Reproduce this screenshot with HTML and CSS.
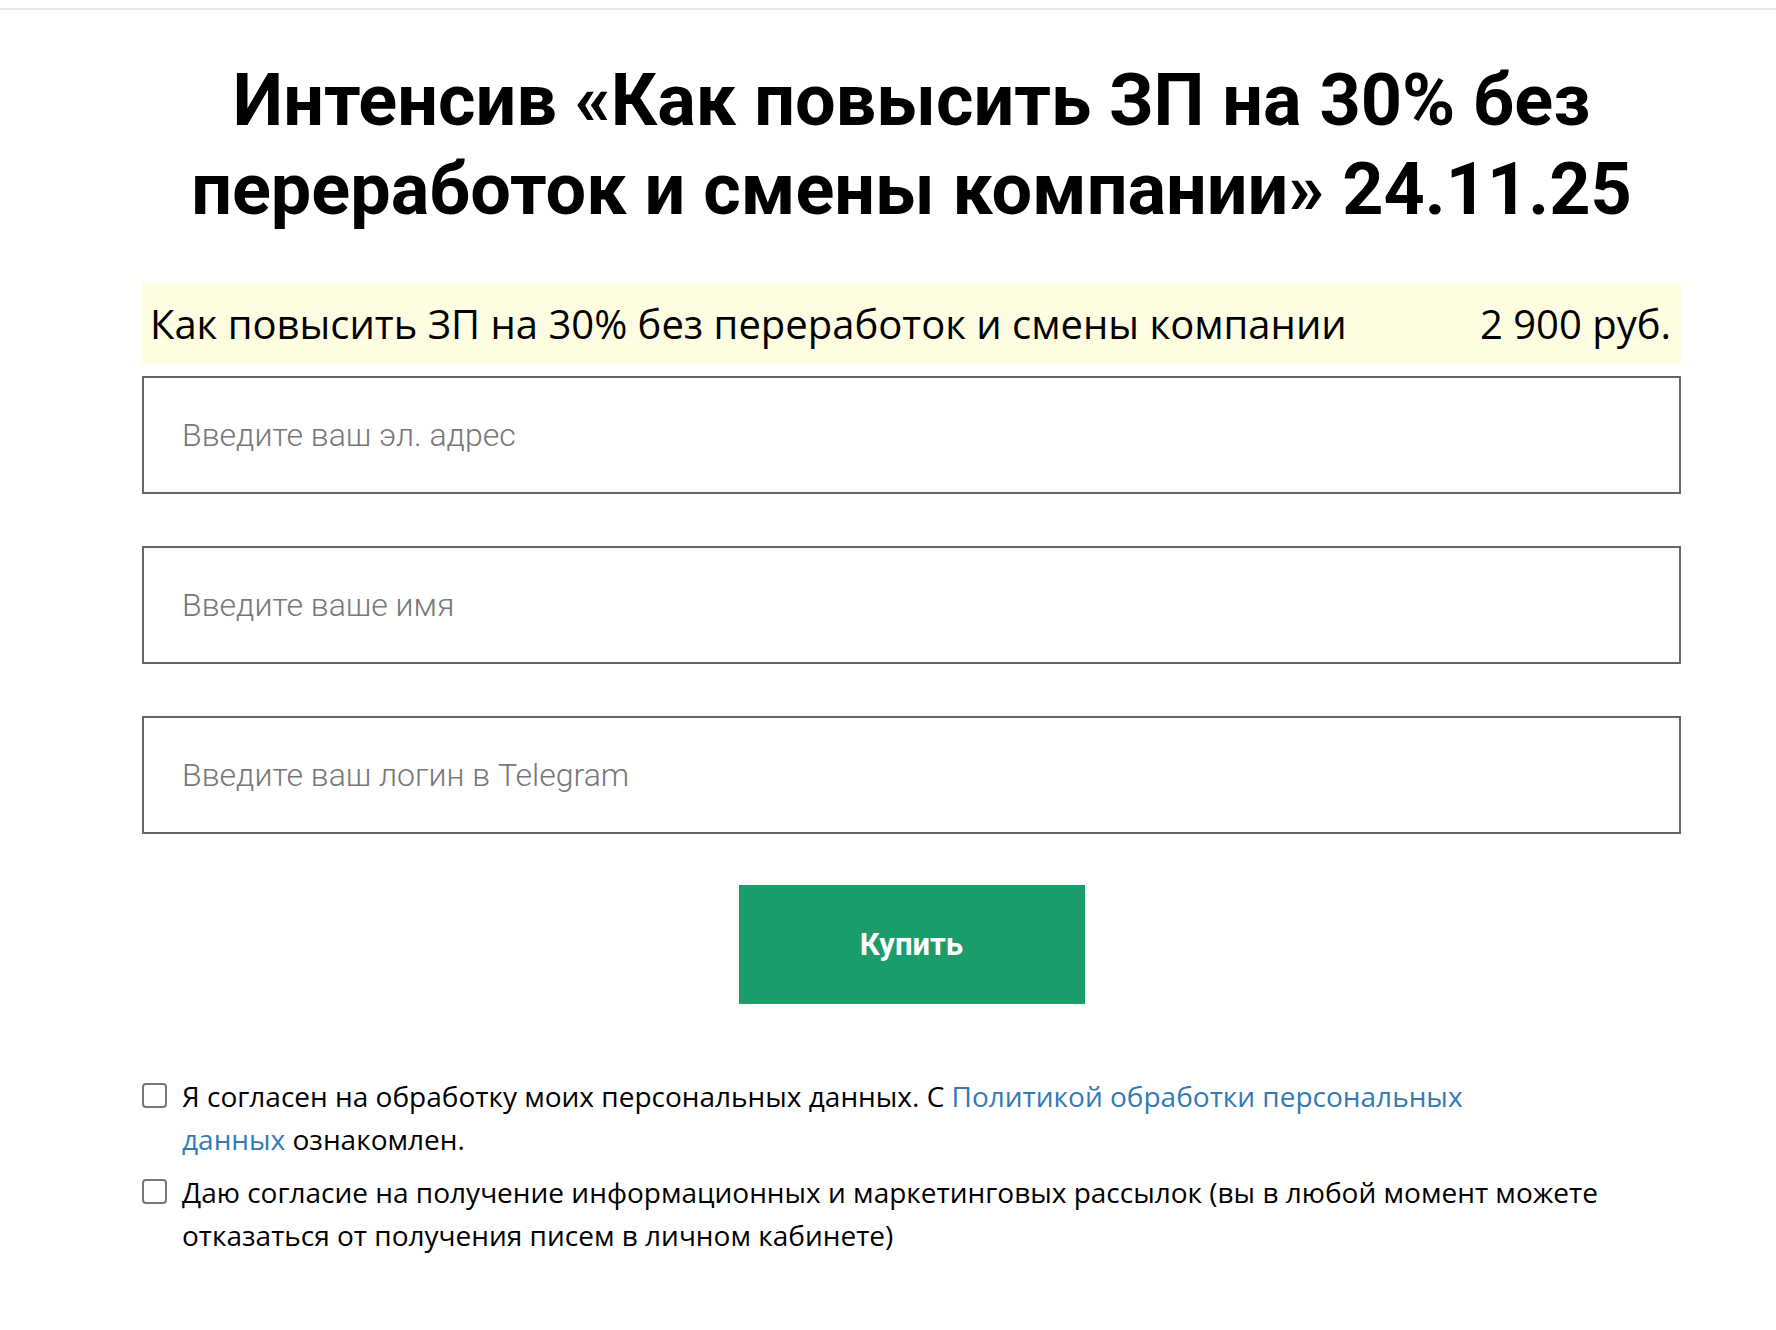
FILE: index.html
```html
<!DOCTYPE html>
<html lang="ru">
<head>
<meta charset="utf-8">
<title>Интенсив</title>
<link rel="stylesheet" href="styles.css">
</head>
<body>
<div class="topline"></div>
<main class="wrap">
  <h1 class="title">Интенсив «Как повысить ЗП на 30% без переработок и смены компании» 24.11.25</h1>
  <div class="product">
    <span class="product-name">Как повысить ЗП на 30% без переработок и смены компании</span>
    <span class="product-price">2 900 руб.</span>
  </div>
  <form class="form">
    <input class="field" type="text" placeholder="Введите ваш эл. адрес">
    <input class="field" type="text" placeholder="Введите ваше имя">
    <input class="field" type="text" placeholder="Введите ваш логин в Telegram">
    <div class="actions">
      <button class="buy" type="button">Купить</button>
    </div>
    <div class="agreements">
      <label class="agree">
        <span class="box"></span>
        <span class="agree-text">Я согласен на обработку моих персональных данных. С <a href="#" class="link">Политикой обработки персональных<br>данных</a> ознакомлен.</span>
      </label>
      <label class="agree">
        <span class="box"></span>
        <span class="agree-text">Даю согласие на получение информационных и маркетинговых рассылок (вы в любой момент можете отказаться от получения писем в личном кабинете)</span>
      </label>
    </div>
  </form>
</main>
</body>
</html>
```
FILE: styles.css
```css
* { box-sizing: border-box; }
html, body { margin: 0; padding: 0; background: #fff; }
body { font-family: "Open Sans", "Liberation Sans", sans-serif; color: #000; }

.topline {
  margin-top: 8px;
  height: 2px;
  background: #e6e6e6;
}

.wrap {
  margin-left: 142px;
  width: 1539px;
}

.title {
  margin: 46px 0 0;
  font-family: Roboto, "Liberation Sans", sans-serif;
  font-weight: 700;
  font-size: 72px;
  line-height: 89px;
  text-align: center;
  color: #000;
}

.product {
  margin-top: 49px;
  height: 81px;
  background: #fffde1;
  display: flex;
  align-items: center;
  justify-content: space-between;
  padding: 0 10px 0 8px;
  font-size: 40px;
  line-height: 54px;
  color: #000;
}

.form {
  margin: 12px 0 0;
  display: flex;
  flex-direction: column;
}

.field {
  display: block;
  width: 100%;
  height: 118px;
  border: 2px solid #666;
  border-radius: 0;
  padding: 0 20px 0 38px;
  font-family: Roboto, "Liberation Sans", sans-serif;
  font-weight: 300;
  font-size: 32px;
  color: #222;
  background: #fff;
  outline: none;
}
.field + .field { margin-top: 52px; }
.field::placeholder { color: #777; opacity: 1; }

.actions {
  margin-top: 51px;
  display: flex;
  justify-content: center;
}

.buy {
  width: 346px;
  height: 119px;
  border: 0;
  background: #1a9d6a;
  color: #fff;
  font-family: Roboto, "Liberation Sans", sans-serif;
  font-weight: 700;
  font-size: 31px;
  cursor: pointer;
}

.agreements {
  margin-top: 71px;
  display: flex;
  flex-direction: column;
  gap: 10px;
}

.agree {
  display: flex;
  align-items: flex-start;
  gap: 15px;
  font-size: 28px;
  line-height: 43px;
  color: #000;
}

.box {
  flex: none;
  width: 25px;
  height: 25px;
  margin-top: 8px;
  border: 2px solid #777;
  border-radius: 4px;
  background: #fff;
}

.agree-text { max-width: 1460px; }

.link {
  color: #337ab7;
  text-decoration: none;
}
```
